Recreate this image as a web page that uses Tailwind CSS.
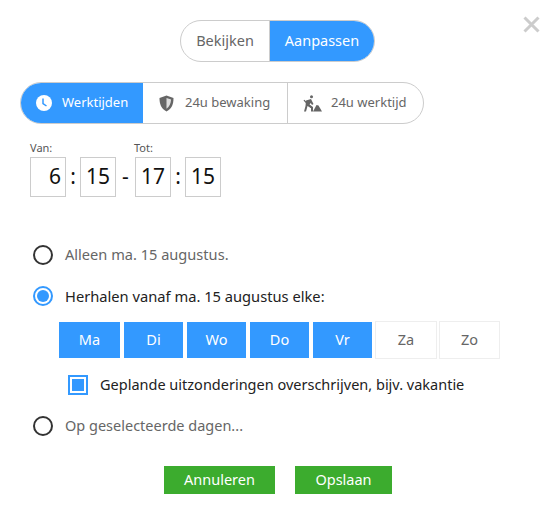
<!doctype html>
<html lang="en">
  <head>
    <meta charset="UTF-8" />
    <title>Werktijden</title>
    <script src="https://cdn.jsdelivr.net/npm/@tailwindcss/browser@4"></script>
  </head>
  <body class="bg-white">
    <div class="relative w-[556px] h-[514px] overflow-hidden bg-white font-['Noto_Sans',sans-serif] text-[#666] pt-5">
      <!-- close -->
      <svg class="absolute left-[523px] top-[16px] w-[17px] h-[17px]" viewBox="0 0 17 17" fill="none" stroke="#ccc" stroke-width="3"><path d="M1.5 1.5l14 14M15.5 1.5l-14 14" /></svg>

      <!-- mode toggle -->
      <div class="ml-[180px] flex w-[195px] h-[42px] rounded-full border border-[#ccc] overflow-hidden text-[14.5px]">
        <div class="w-[89px] flex items-center justify-center border-r border-[#ccc]">Bekijken</div>
        <div class="flex-1 flex items-center justify-center bg-[#3399ff] text-white">Aanpassen</div>
      </div>

      <!-- tabs -->
      <div class="ml-5 mt-5 flex w-[404px] h-[42px] rounded-full border border-[#ccc] overflow-hidden text-[13px]">
        <div class="w-[123px] flex items-center pl-[16px] gap-[10px] bg-[#3399ff] text-white -ml-px -my-px h-[42px]">
          <svg class="w-4 h-4" viewBox="0 0 16 16"><circle cx="8" cy="8" r="8" fill="#fff" /><path d="M7 3.5v5l3.5 2.5" fill="none" stroke="#3399ff" stroke-width="1.5" /></svg>
          <span>Werktijden</span>
        </div>
        <div class="w-[145px] flex items-center pl-[16px] gap-[11px] border-r border-[#ccc]">
          <svg class="w-[15px] h-[17px]" viewBox="0 0 15 17"><path d="M7.500 0.500L14.500 3c0 6-1.500 10.500-7 13.500C2 13.500 0.500 9 0.500 3z" fill="#666" /><path d="M7.500 3v10.800c3-2 4.300-5.300 4.600-9.200z" fill="#ddd" /></svg>
          <span>24u bewaking</span>
        </div>
        <div class="flex-1 flex items-center pl-[15px] gap-[9px]">
          <svg class="w-[19px] h-[17px]" viewBox="0 0 19 17" fill="#666"><circle cx="8.500" cy="1.800" r="1.500" /><path d="M3 5.500L8 4l2.500 5-1.500 1-1.200-2L6.500 9.500 10 12v4.500H8v-3.500L4.500 11 4 13l-1 3.500H1L2.500 11z" /><path d="M0.500 5.500l1-.8 7 7.500-1 .8z" /><path d="M10 16.500L13.500 10l2 .5 3.500 6z" /></svg>
          <span>24u werktijd</span>
        </div>
      </div>

      <!-- time -->
      <div class="ml-[30px] mt-[17px] flex text-[11px] leading-[14px] text-[#555]">
        <span class="w-[104px]">Van:</span>
        <span>Tot:</span>
      </div>
      <div class="ml-[30px] mt-[2px] flex items-center text-[21px] text-[#111]">
        <div class="w-9 h-10 border border-[#ccc] flex items-center justify-end pr-[4px]">6</div>
        <span class="w-[14px] text-center">:</span>
        <div class="w-9 h-10 border border-[#ccc] flex items-center justify-center">15</div>
        <span class="w-[19px] text-center">-</span>
        <div class="w-9 h-10 border border-[#ccc] flex items-center justify-center">17</div>
        <span class="w-[14px] text-center">:</span>
        <div class="w-9 h-10 border border-[#ccc] flex items-center justify-center">15</div>
      </div>

      <!-- options -->
      <div class="ml-[33px] mt-[48px] flex items-center gap-3 h-5 text-[14.6px]">
        <span class="w-5 h-5 rounded-full border-2 border-[#333]"></span>
        <span>Alleen ma. 15 augustus.</span>
      </div>
      <div class="ml-[33px] mt-[21px] flex items-center gap-3 h-5 text-[14.7px] text-[#222]">
        <span class="w-5 h-5 rounded-full border-2 border-[#3399ff] flex items-center justify-center"><span class="w-3 h-3 rounded-full bg-[#3399ff]"></span></span>
        <span>Herhalen vanaf ma. 15 augustus elke:</span>
      </div>

      <div class="ml-[59px] mt-4 flex h-[36px] text-[14.5px]">
        <div class="w-[61px] mr-[4px] flex items-center justify-center bg-[#3399ff] text-white">Ma</div>
        <div class="w-[59px] mr-[4px] flex items-center justify-center bg-[#3399ff] text-white">Di</div>
        <div class="w-[59px] mr-[4px] flex items-center justify-center bg-[#3399ff] text-white">Wo</div>
        <div class="w-[59px] mr-[4px] flex items-center justify-center bg-[#3399ff] text-white">Do</div>
        <div class="w-[59px] mr-[3px] flex items-center justify-center bg-[#3399ff] text-white">Vr</div>
        <div class="w-[62px] mr-[2px] -mt-px h-[38px] flex items-center justify-center border border-[#eee]">Za</div>
        <div class="w-[61px] -mt-px h-[38px] flex items-center justify-center border border-[#eee]">Zo</div>
      </div>

      <div class="ml-[68px] mt-[17px] flex items-center gap-3 h-5 text-[14.5px] text-[#222]">
        <span class="w-5 h-5 border-2 border-[#3399ff] flex items-center justify-center"><span class="w-3 h-3 bg-[#3399ff]"></span></span>
        <span>Geplande uitzonderingen overschrijven, bijv. vakantie</span>
      </div>

      <div class="ml-[33px] mt-[21px] flex items-center gap-3 h-5 text-[14.5px]">
        <span class="w-5 h-5 rounded-full border-2 border-[#333]"></span>
        <span>Op geselecteerde dagen...</span>
      </div>

      <!-- actions -->
      <div class="ml-[164px] mt-[30px] flex gap-5 text-[14.5px] text-white">
        <div class="w-[111px] h-[28px] flex items-center justify-center bg-[#3cac2e]">Annuleren</div>
        <div class="w-[97px] h-[28px] flex items-center justify-center bg-[#3cac2e]">Opslaan</div>
      </div>
    </div>
  </body>
</html>
